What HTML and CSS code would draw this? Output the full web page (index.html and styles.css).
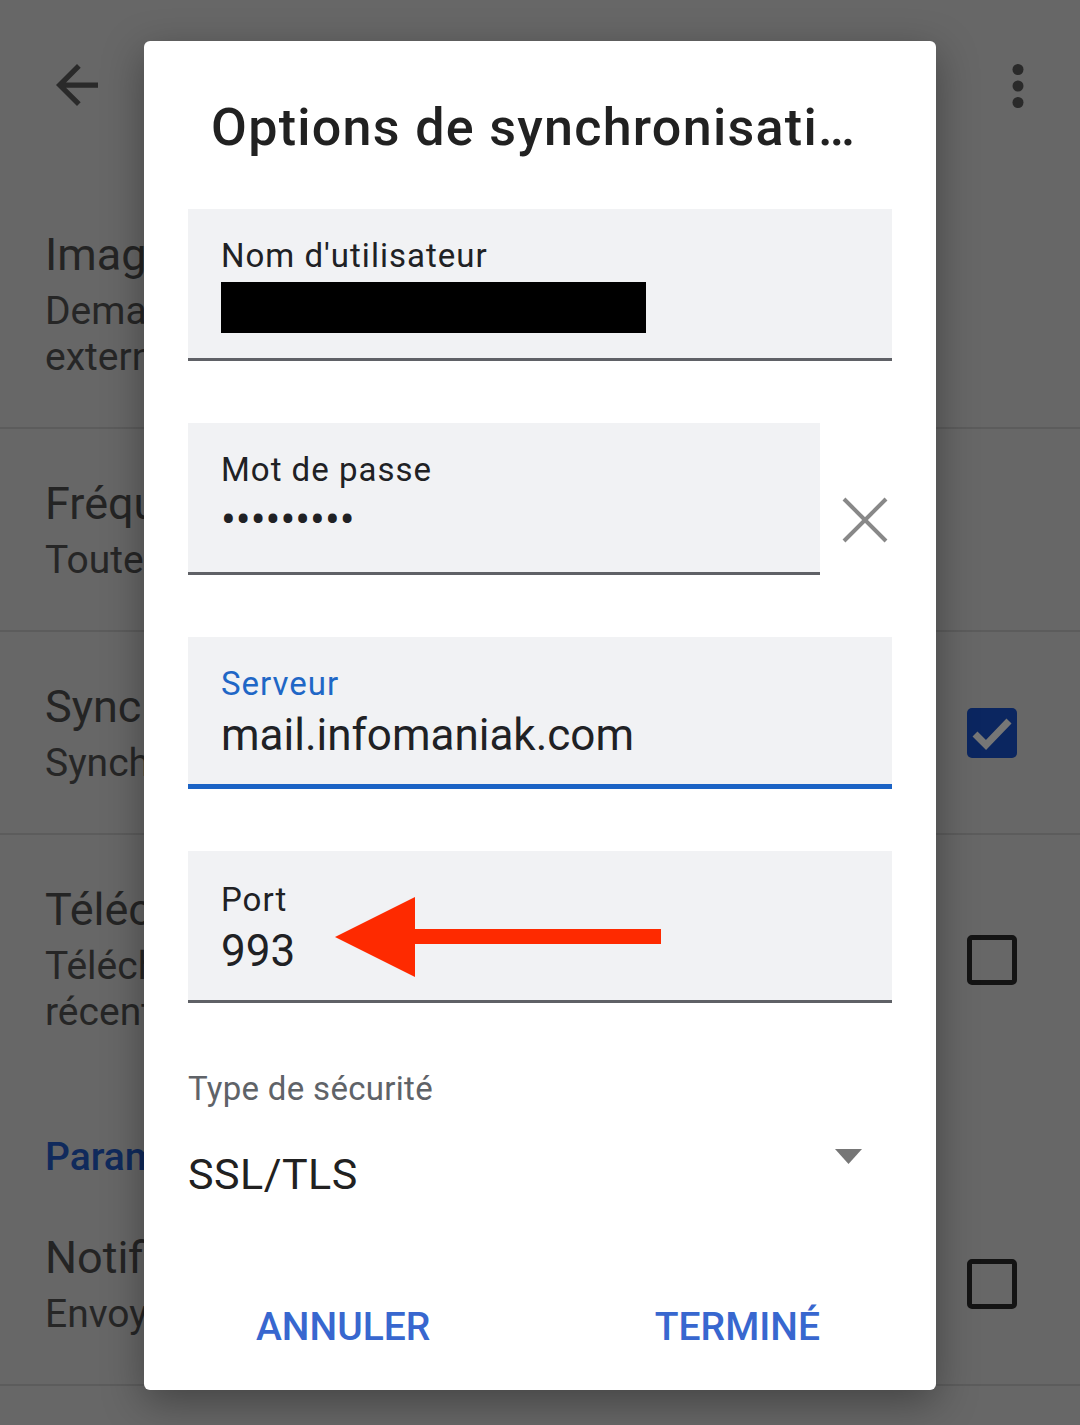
FILE: index.html
```html
<!DOCTYPE html>
<html lang="fr">
<head>
    <meta charset="UTF-8">
    <meta name="viewport" content="width=device-width, initial-scale=1.0">
    <title>Options de synchronisation</title>
    <link rel="stylesheet" href="styles.css">
</head>
<body>

<div class="screen">
    <div class="toolbar">
        <svg class="back" viewBox="4 4 16 16" width="42" height="42">
            <path d="M20 11H7.83l5.59-5.59L12 4l-8 8 8 8 1.41-1.41L7.83 13H20v-2z"/>
        </svg>
        <svg class="more" viewBox="0 0 16 44" width="16" height="44">
            <circle cx="8" cy="5.5" r="5.5"/>
            <circle cx="8" cy="22" r="5.5"/>
            <circle cx="8" cy="38.5" r="5.5"/>
        </svg>
    </div>

    <div class="pref pref-tall">
        <div class="pref-text">
            <div class="pref-title">Images externes</div>
            <div class="pref-sub">Demander avant d'afficher les images<br>externes</div>
        </div>
    </div>

    <div class="pref">
        <div class="pref-text">
            <div class="pref-title">Fréquence de synchronisation</div>
            <div class="pref-sub">Toutes les 15 minutes</div>
        </div>
    </div>

    <div class="pref">
        <div class="pref-text">
            <div class="pref-title">Synchroniser les suppressions</div>
            <div class="pref-sub">Synchroniser les messages supprimés</div>
        </div>
        <div class="checkbox checked">
            <svg viewBox="0 0 50 50" width="50" height="50">
                <polyline points="8,26 19,37 42,13"/>
            </svg>
        </div>
    </div>

    <div class="pref pref-tall pref-last">
        <div class="pref-text">
            <div class="pref-title">Télécharger les pièces jointes</div>
            <div class="pref-sub">Télécharger les pièces jointes des messages<br>récents</div>
        </div>
        <div class="checkbox"></div>
    </div>

    <div class="pref-header">Paramètres de notification</div>

    <div class="pref">
        <div class="pref-text">
            <div class="pref-title">Notifications</div>
            <div class="pref-sub">Envoyer des notifications</div>
        </div>
        <div class="checkbox"></div>
    </div>
</div>

<div class="dialog">
    <h1 class="dialog-title">Options de synchronisati…</h1>

    <div class="fields">
        <div class="field">
            <div class="field-label">Nom d'utilisateur</div>
            <div class="redacted"></div>
        </div>

        <div class="field-row">
            <div class="field field-short">
                <div class="field-label">Mot de passe</div>
                <div class="field-dots">•••••••••</div>
            </div>
            <svg class="clear" viewBox="0 0 46 46" width="46" height="46">
                <line x1="2" y1="2" x2="44" y2="44"/>
                <line x1="44" y1="2" x2="2" y2="44"/>
            </svg>
        </div>

        <div class="field field-focused">
            <div class="field-label label-blue">Serveur</div>
            <div class="field-value">mail.infomaniak.com</div>
        </div>

        <div class="field field-port">
            <div class="field-label">Port</div>
            <div class="field-value">993</div>
            <!-- fleche rouge d'annotation -->
            <svg class="annot" viewBox="0 0 326 80" width="326" height="80">
                <polygon points="0,40 80,0 80,32 326,32 326,47 80,47 80,80"/>
            </svg>
        </div>
    </div>

    <div class="select-label">Type de sécurité</div>
    <div class="select-row">
        <span class="select-value">SSL/TLS</span>
        <svg class="caret" viewBox="0 0 27 15" width="27" height="15">
            <polygon points="0,0 27,0 13.5,15"/>
        </svg>
    </div>

    <div class="actions">
        <button class="btn">ANNULER</button>
        <button class="btn">TERMINÉ</button>
    </div>
</div>

</body>
</html>
```

FILE: styles.css
```css
body{
    margin: 0;
    padding: 0;
    width: 1080px;
    height: 1425px;
    overflow: hidden;
    background: #676767;
    font-family: Roboto, "Noto Sans", sans-serif;
}

.screen{
    position: relative;
    width: 1080px;
    height: 1425px;
}

/* barre du haut (assombrie par le dialogue) */
.toolbar{
    height: 180px;
    box-sizing: border-box;
    padding: 64px 54px 0 56px;
    display: flex;
    justify-content: space-between;
    align-items: flex-start;
}

.back{
    fill: #2a2a2a;
}

.more{
    fill: #2a2a2a;
}

.pref{
    height: 203px;
    box-sizing: border-box;
    padding: 48px 63px 0 45px;
    display: flex;
    justify-content: space-between;
    align-items: flex-start;
    border-bottom: 2px solid #5c5c5c;
}

.pref-tall{
    height: 249px;
}

.pref-last{
    border-bottom: none;
}

.pref-text{
    flex: 1;
}

.pref-title{
    font-size: 45px;
    line-height: 54px;
    color: #242424;
}

.pref-sub{
    font-size: 39px;
    line-height: 46px;
    margin-top: 6px;
    color: #262626;
}

.pref-header{
    height: 99px;
    box-sizing: border-box;
    padding: 50px 0 0 45px;
    font-size: 39px;
    line-height: 46px;
    font-weight: 500;
    color: #102a5c;
}

.checkbox{
    width: 50px;
    height: 50px;
    box-sizing: border-box;
    border: 5px solid #141414;
    border-radius: 5px;
    align-self: center;
    margin-top: -48px;
}

.checkbox.checked{
    border: none;
    background: #0b2660;
}

.checkbox svg{
    display: block;
}

.checkbox polyline{
    fill: none;
    stroke: #767676;
    stroke-width: 7;
}

/* dialogue */
.dialog{
    position: absolute;
    left: 144px;
    top: 41px;
    width: 792px;
    height: 1349px;
    box-sizing: border-box;
    padding: 57px 44px 0 44px;
    background: #fff;
    border-radius: 6px;
    box-shadow: 0 12px 40px rgba(0, 0, 0, 0.35);
}

.dialog-title{
    margin: 0 0 51px 23px;
    font-size: 52px;
    line-height: 60px;
    font-weight: 500;
    letter-spacing: 1.3px;
    color: #212121;
    white-space: nowrap;
}

.fields{
    display: flex;
    flex-direction: column;
    gap: 62px;
}

.field{
    position: relative;
    height: 152px;
    box-sizing: border-box;
    padding: 27px 33px 0 33px;
    background: #f1f2f4;
    border-bottom: 3px solid #5f6166;
}

.field-row{
    display: flex;
    align-items: flex-start;
    justify-content: space-between;
}

.field-short{
    width: 632px;
}

.clear{
    margin: 74px 4px 0 0;
}

.clear line{
    stroke: #888;
    stroke-width: 4;
}

.field-focused{
    border-bottom: 5px solid #1b63c5;
}

.field-label{
    font-size: 33px;
    line-height: 40px;
    letter-spacing: 1px;
    color: #202124;
}

.label-blue{
    color: #1f67c6;
}

.field-value{
    margin-top: 5px;
    font-size: 44px;
    line-height: 52px;
    color: #202124;
}

.field-port .field-label{
    margin-top: 2px;
}

.redacted{
    width: 425px;
    height: 51px;
    margin-top: 6px;
    background: #000;
}

.field-dots{
    margin-top: 10px;
    font-size: 44px;
    line-height: 40px;
    letter-spacing: 0;
    color: #202124;
}

.annot{
    position: absolute;
    left: 147px;
    top: 46px;
    fill: #fe2a00;
}

.select-label{
    margin-top: 66px;
    font-size: 33px;
    line-height: 40px;
    letter-spacing: 0.3px;
    color: #5f6368;
}

.select-row{
    margin-top: 40px;
    display: flex;
    justify-content: space-between;
    align-items: flex-start;
}

.select-value{
    font-size: 43px;
    line-height: 50px;
    letter-spacing: 0.5px;
    color: #212121;
}

.caret{
    margin-right: 30px;
    fill: #767676;
}

.actions{
    margin-top: 105px;
    display: flex;
    justify-content: space-between;
    padding: 0 72px 0 68px;
}

.btn{
    padding: 0;
    border: none;
    background: none;
    font-family: Roboto, "Noto Sans", sans-serif;
    font-size: 39px;
    line-height: 46px;
    font-weight: 500;
    color: #3867cf;
    cursor: pointer;
}
```
